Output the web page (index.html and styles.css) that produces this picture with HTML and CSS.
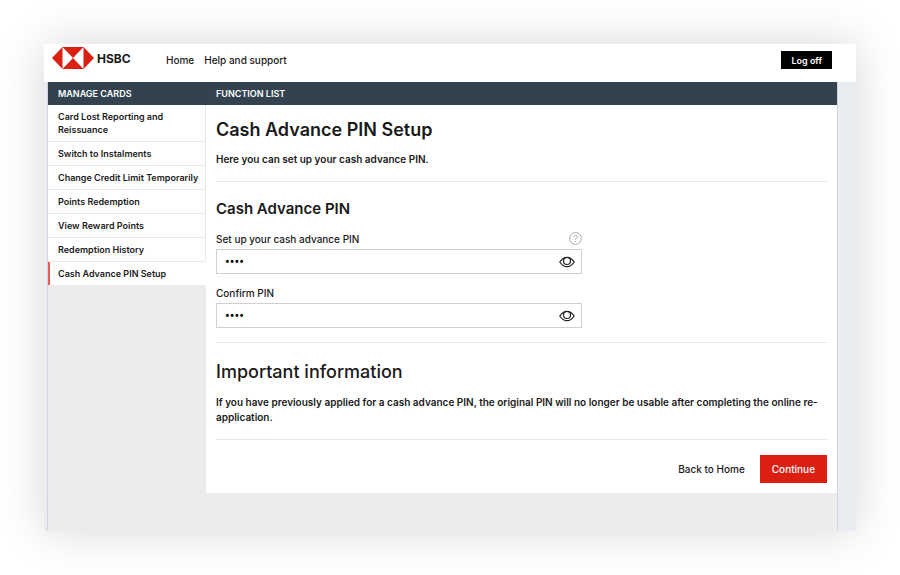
FILE: index.html
```html
<!DOCTYPE html>
<html lang="en">
<head>
  <meta charset="UTF-8">
  <meta name="viewport" content="width=device-width, initial-scale=1.0">
  <title>Cash Advance PIN Setup</title>
  <link rel="stylesheet" href="styles.css">
</head>
<body>
  <div class="window">
    <!-- Top bar -->
    <header class="topbar">
      <div class="brand">
        <svg class="logo" viewBox="0 0 42 22" aria-hidden="true">
          <path d="M0 11 10.500 0V22ZM42 11 31.500 0V22ZM10.500 0H31.500L21 11ZM10.500 22H31.500L21 11Z"/>
          <path class="logo-edge" d="M10.500 .3H31.500M10.500 21.700H31.500"/>
        </svg>
        <span class="brand-name">HSBC</span>
      </div>
      <nav class="topnav">
        <a href="#">Home</a>
        <a href="#">Help and support</a>
      </nav>
      <button type="button" class="btn btn-logoff">Log off</button>
    </header>

    <div class="stage">
      <div class="page">
        <div class="titlebar">
          <span class="titlebar-side">MANAGE CARDS</span>
          <span class="titlebar-main">FUNCTION LIST</span>
        </div>

        <div class="columns">
          <!-- Side menu -->
          <nav class="menu">
            <a href="#">Card Lost Reporting and Reissuance</a>
            <a href="#">Switch to Instalments</a>
            <a href="#">Change Credit Limit Temporarily</a>
            <a href="#">Points Redemption</a>
            <a href="#">View Reward Points</a>
            <a href="#">Redemption History</a>
            <a href="#" class="active" aria-current="page">Cash Advance PIN Setup</a>
          </nav>

          <!-- PIN form -->
          <main class="content">
            <section class="block">
              <h1>Cash Advance PIN Setup</h1>
              <p>Here you can set up your cash advance PIN.</p>
            </section>

            <form id="pinForm">
              <section class="block">
                <h2>Cash Advance PIN</h2>
                <div class="field">
                  <div class="field-head">
                    <label for="pin">Set up your cash advance PIN</label>
                    <button type="button" class="icon-btn" aria-label="Help">
                      <svg class="icon-help" viewBox="0 0 13 13" aria-hidden="true">
                        <circle cx="6.500" cy="6.500" r="5.900"/>
                        <path d="M4.700 5.200c0-1.200.8-1.900 1.800-1.900s1.800.7 1.800 1.700c0 1.300-1.800 1.400-1.800 2.800M6.500 8.900v1"/>
                      </svg>
                    </button>
                  </div>
                  <div class="pin-box">
                    <input type="password" id="pin" value="1234" maxlength="4">
                    <button type="button" class="icon-btn" aria-label="Show PIN">
                      <svg class="icon-eye" viewBox="0 0 16 12" aria-hidden="true">
                        <path d="M.8 6C3 2.700 5.300 1.300 8 1.300S13 2.700 15.200 6C13 9.300 10.700 10.700 8 10.700S3 9.300.8 6Z"/>
                        <circle cx="8" cy="5" r="3.500"/>
                      </svg>
                    </button>
                  </div>
                </div>
                <div class="field">
                  <div class="field-head">
                    <label for="pinConfirm">Confirm PIN</label>
                  </div>
                  <div class="pin-box">
                    <input type="password" id="pinConfirm" value="1234" maxlength="4">
                    <button type="button" class="icon-btn" aria-label="Show PIN">
                      <svg class="icon-eye" viewBox="0 0 16 12" aria-hidden="true">
                        <path d="M.8 6C3 2.700 5.300 1.300 8 1.300S13 2.700 15.200 6C13 9.300 10.700 10.700 8 10.700S3 9.300.8 6Z"/>
                        <circle cx="8" cy="5" r="3.500"/>
                      </svg>
                    </button>
                  </div>
                </div>
              </section>

              <section class="block">
                <h2 class="info-title">Important information</h2>
                <p>If you have previously applied for a cash advance PIN, the original PIN will no longer be usable after completing the online re-application.</p>
              </section>

              <div class="actions">
                <a href="#">Back to Home</a>
                <button type="submit" class="btn btn-continue">Continue</button>
              </div>
            </form>
          </main>
        </div>
      </div>
    </div>
  </div>
</body>
</html>
```
FILE: styles.css
```css
:root {
  --red:    #db1f11;
  --slate:  #32434f;
  --grey:   #ececec;
  --line:   #e8e8e8;
  --text:   #1a1a1a;
}
* { box-sizing: border-box; }
body {
  margin: 0;
  padding: 44px;
  background: #fff;
  color: var(--text);
  font-family: Inter, "Liberation Sans", sans-serif;
  font-size: 10px;
  font-weight: 500;
  line-height: 15px;
}
a {
  color: inherit;
  text-decoration: none;
}
h1, h2, p { margin: 0; }
p { font-weight: 600; }
.window {
  background: #fff;
  box-shadow: 0 0 44px rgba(0, 0, 0, 0.16);
}
/* Top bar */
.topbar {
  display: flex;
  align-items: center;
  height: 38px;
  padding: 0 24px 6px 8px;
}
.brand {
  display: flex;
  align-items: center;
  gap: 3px;
  width: 114px;
  margin-bottom: 4px;
}
.logo {
  width: 42px;
  height: 22px;
  fill: var(--red);
}
.logo-edge {
  stroke: var(--red);
  stroke-width: 0.6;
}
.brand-name {
  font-size: 12px;
  font-weight: 700;
}
.topnav {
  display: flex;
  gap: 10px;
  flex: 1;
}
.btn {
  border: none;
  font: inherit;
  color: #fff;
  cursor: pointer;
}
.btn-logoff {
  height: 18px;
  padding: 0 10px;
  background: #000;
  font-size: 9px;
  font-weight: 600;
}
/* Page frame */
.stage {
  background: #e9edf2;
  padding: 0 18px 0 3px;
}
.page {
  border: 1px solid #d2d5d9;
  border-width: 0 1px;
  background: var(--grey);
  padding-bottom: 38px;
}
.titlebar {
  display: flex;
  background: var(--slate);
  color: #fff;
  font-size: 9px;
  font-weight: 600;
  line-height: 23px;
}
.titlebar-side {
  width: 158px;
  padding-left: 10px;
}
.titlebar-main { padding-left: 10px; }
.columns {
  display: flex;
  align-items: flex-start;
}
/* Side menu */
.menu {
  width: 158px;
  background: #fff;
  font-size: 9px;
  font-weight: 600;
  line-height: 13px;
}
.menu a {
  display: block;
  padding: 5px 4px 5px 10px;
  border-right: 1px solid var(--line);
  border-bottom: 1px solid var(--line);
}
.menu .active {
  padding-left: 8px;
  border-left: 2px solid #ee5a50;
  border-right-color: #fff;
  border-bottom: none;
}
/* Content */
.content {
  flex: 1;
  background: #fff;
  padding: 13px 10px 10px;
}
.block {
  border-bottom: 1px solid var(--line);
  padding-bottom: 14px;
  margin-bottom: 15px;
}
h1, h2 {
  font-weight: 600;
  line-height: 24px;
}
h1 {
  font-size: 18px;
  margin-bottom: 10px;
}
h2 {
  font-size: 15px;
  margin-bottom: 11px;
}
.info-title {
  font-size: 18px;
  font-weight: 500;
  margin: 17px 0 11px;
}
.field {
  max-width: 366px;
  margin-bottom: 12px;
}
.field:last-child { margin-bottom: 0; }
.field-head {
  display: flex;
  justify-content: space-between;
  margin-bottom: 2px;
}
.pin-box {
  display: flex;
  align-items: center;
  height: 25px;
  padding: 0 6px 0 8px;
  border: 1px solid #d0d0d0;
}
.pin-box input {
  flex: 1;
  border: none;
  outline: none;
  padding: 0;
  background: none;
  color: #000;
  font-family: Roboto, sans-serif;
  font-size: 14px;
}
.icon-btn {
  display: flex;
  padding: 0;
  border: none;
  background: none;
  cursor: pointer;
}
.icon-help,
.icon-eye {
  fill: none;
  stroke: #222;
}
.icon-help {
  width: 13px;
  height: 13px;
  stroke: #aaa;
}
.icon-eye {
  width: 16px;
  height: 12px;
  stroke-width: 1.2;
}
/* Actions */
.actions {
  display: flex;
  align-items: center;
  justify-content: flex-end;
  gap: 15px;
}
.btn-continue {
  height: 28px;
  padding: 0 12px;
  background: var(--red);
}
```
